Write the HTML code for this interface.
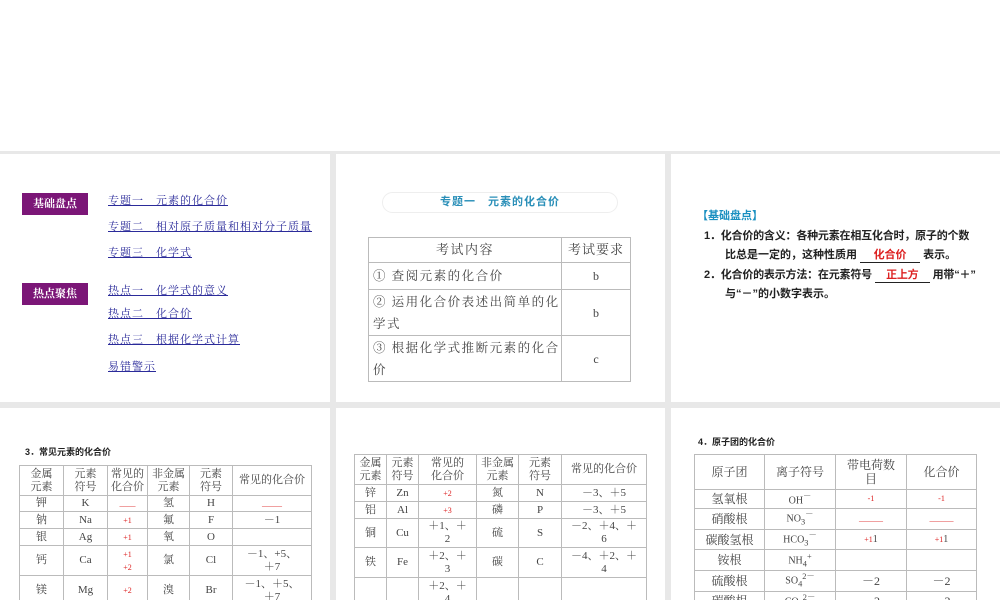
<!DOCTYPE html>
<html><head><meta charset="utf-8">
<style>
*{margin:0;padding:0;box-sizing:border-box}
body{width:1000px;height:600px;background:#e8e8e8;position:relative;overflow:hidden;font-family:"Liberation Serif","Noto Serif CJK SC",serif;color:#222}
.top{position:absolute;left:0;top:0;width:1000px;height:151px;background:#fff}
.p{position:absolute;background:#fff;overflow:hidden}
.a{position:absolute;white-space:nowrap}
.lab{position:absolute;left:22px;width:66px;height:22px;background:#7b1677;color:#fff;font-size:11px;line-height:22px;text-align:center;font-weight:bold}
.lk{position:absolute;left:108px;font-size:11px;color:#2b2b9a;text-decoration:underline;white-space:nowrap;letter-spacing:1px}
table{position:absolute;border-collapse:collapse;table-layout:fixed}
td{border:1px solid #bbb;text-align:center;font-size:10px;line-height:12px;color:#444;overflow:hidden;padding:0}
.r{color:#d22;font-size:8px}
.s{font-family:"Liberation Sans","Noto Sans CJK SC",sans-serif}
.big td{font-size:11px;line-height:13px}
.big td.r{font-size:8px;color:#d22}
</style></head><body>
<div class="top"></div>

<div class="p" style="left:0;top:154px;width:330px;height:248px">
<div class="lab" style="top:39px">基础盘点</div>
<div class="lab" style="top:129px">热点聚焦</div>
<div class="lk" style="top:38px">专题一　元素的化合价</div>
<div class="lk" style="top:64px">专题二　相对原子质量和相对分子质量</div>
<div class="lk" style="top:90px">专题三　化学式</div>
<div class="lk" style="top:128px">热点一　化学式的意义</div>
<div class="lk" style="top:151px">热点二　化合价</div>
<div class="lk" style="top:177px">热点三　根据化学式计算</div>
<div class="lk" style="top:204px">易错警示</div>
</div>

<div class="p" style="left:336px;top:154px;width:329px;height:248px">
<div class="a s" style="left:46px;top:38px;width:236px;height:21px;border:1px solid #eee;border-radius:11px;text-align:center;line-height:19px;font-size:11px;color:#2a8fb8;font-weight:bold;letter-spacing:1px">专题一　元素的化合价</div>
<table style="left:32px;top:83px;width:262px">
<col style="width:193px"><col style="width:69px">
<tr style="height:25px"><td style="font-size:13px;letter-spacing:1.5px">考试内容</td><td style="font-size:13px;letter-spacing:1px">考试要求</td></tr>
<tr style="height:27px"><td style="text-align:left;padding-left:4px;font-size:12.5px;letter-spacing:1.5px">① 查阅元素的化合价</td><td style="font-size:12px">b</td></tr>
<tr style="height:46px"><td style="text-align:left;padding-left:4px;font-size:12.5px;line-height:22px;letter-spacing:1.5px">② 运用化合价表述出简单的化学式</td><td style="font-size:12px">b</td></tr>
<tr style="height:46px"><td style="text-align:left;padding-left:4px;font-size:12.5px;line-height:22px;letter-spacing:1.5px">③ 根据化学式推断元素的化合价</td><td style="font-size:12px">c</td></tr>
</table>
</div>

<div class="p s" style="left:671px;top:154px;width:329px;height:248px;font-size:11px;font-weight:bold;color:#222">
<div class="a" style="left:26px;top:53px;color:#1a8fc0">【基础盘点】</div>
<div class="a" style="left:33px;top:73px;letter-spacing:-0.2px">1．化合价的含义：各种元素在相互化合时，原子的个数</div>
<div class="a" style="left:54px;top:92px">比总是一定的，这种性质用 <span style="display:inline-block;width:60px;border-bottom:1px solid #222;text-align:center;color:#d22">化合价</span> 表示。</div>
<div class="a" style="left:33px;top:112px;letter-spacing:-0.2px">2．化合价的表示方法：在元素符号 <span style="display:inline-block;width:55px;border-bottom:1px solid #222;text-align:center;color:#d22">正上方</span> 用带“＋”</div>
<div class="a" style="left:54px;top:131px">与“－”的小数字表示。</div>
</div>

<div class="p" style="left:0;top:408px;width:330px;height:192px">
<div class="a s" style="left:25px;top:37px;font-size:9px;font-weight:bold">3．常见元素的化合价</div>
<table class="big" style="left:19px;top:57px;width:292px">
<col style="width:44px"><col style="width:44px"><col style="width:40px"><col style="width:42px"><col style="width:43px"><col style="width:79px">
<tr style="height:30px"><td>金属<br>元素</td><td>元素<br>符号</td><td>常见的<br>化合价</td><td>非金属<br>元素</td><td>元素<br>符号</td><td>常见的化合价</td></tr>
<tr style="height:16px"><td>钾</td><td>K</td><td class="r">____</td><td>氢</td><td>H</td><td class="r">_____</td></tr>
<tr style="height:17px"><td>钠</td><td>Na</td><td class="r">+1</td><td>氟</td><td>F</td><td>－1</td></tr>
<tr style="height:17px"><td>银</td><td>Ag</td><td class="r">+1</td><td>氧</td><td>O</td><td></td></tr>
<tr style="height:30px"><td>钙</td><td>Ca</td><td class="r">+1<br>+2</td><td>氯</td><td>Cl</td><td>－1、+5、<br>＋7</td></tr>
<tr style="height:30px"><td>镁</td><td>Mg</td><td class="r">+2</td><td>溴</td><td>Br</td><td>－1、＋5、<br>＋7</td></tr>
</table>
</div>

<div class="p" style="left:336px;top:408px;width:329px;height:192px">
<table class="big" style="left:18px;top:46px;width:292px">
<col style="width:32px"><col style="width:32px"><col style="width:58px"><col style="width:42px"><col style="width:43px"><col style="width:85px">
<tr style="height:30px"><td>金属<br>元素</td><td>元素<br>符号</td><td>常见的<br>化合价</td><td>非金属<br>元素</td><td>元素<br>符号</td><td>常见的化合价</td></tr>
<tr style="height:17px"><td>锌</td><td>Zn</td><td class="r">+2</td><td>氮</td><td>N</td><td>－3、＋5</td></tr>
<tr style="height:17px"><td>铝</td><td>Al</td><td class="r">+3</td><td>磷</td><td>P</td><td>－3、＋5</td></tr>
<tr style="height:29px"><td>铜</td><td>Cu</td><td>＋1、＋<br>2</td><td>硫</td><td>S</td><td>－2、＋4、＋<br>6</td></tr>
<tr style="height:30px"><td>铁</td><td>Fe</td><td>＋2、＋<br>3</td><td>碳</td><td>C</td><td>－4、＋2、＋<br>4</td></tr>
<tr style="height:30px"><td></td><td></td><td>＋2、＋<br>4</td><td></td><td></td><td></td></tr>
</table>
</div>

<div class="p" style="left:671px;top:408px;width:329px;height:192px">
<div class="a s" style="left:27px;top:27px;font-size:9px;font-weight:bold">4．原子团的化合价</div>
<table style="left:23px;top:46px;width:282px">
<col style="width:70px"><col style="width:71px"><col style="width:71px"><col style="width:70px">
<tr style="height:35px"><td style="font-size:12px">原子团</td><td style="font-size:12px">离子符号</td><td style="font-size:12px;line-height:14px">带电荷数<br>目</td><td style="font-size:12px">化合价</td></tr>
<tr style="height:19px"><td style="font-size:12px">氢氧根</td><td>OH<sup>－</sup></td><td class="r">-1</td><td class="r">-1</td></tr>
<tr style="height:21px"><td style="font-size:12px">硝酸根</td><td>NO<sub>3</sub><sup>－</sup></td><td class="r">______</td><td class="r">______</td></tr>
<tr style="height:20px"><td style="font-size:12px">碳酸氢根</td><td>HCO<sub>3</sub><sup>－</sup></td><td><span class="r">+1</span>1</td><td><span class="r">+1</span>1</td></tr>
<tr style="height:21px"><td style="font-size:12px">铵根</td><td>NH<sub>4</sub><sup>+</sup></td><td></td><td></td></tr>
<tr style="height:20px"><td style="font-size:12px">硫酸根</td><td>SO<sub>4</sub><sup>2－</sup></td><td style="font-size:12px">－2</td><td style="font-size:12px">－2</td></tr>
<tr style="height:20px"><td style="font-size:12px">碳酸根</td><td>CO<sub>3</sub><sup>2－</sup></td><td style="font-size:12px">－2</td><td style="font-size:12px">－2</td></tr>
</table>
</div>
</body></html>
